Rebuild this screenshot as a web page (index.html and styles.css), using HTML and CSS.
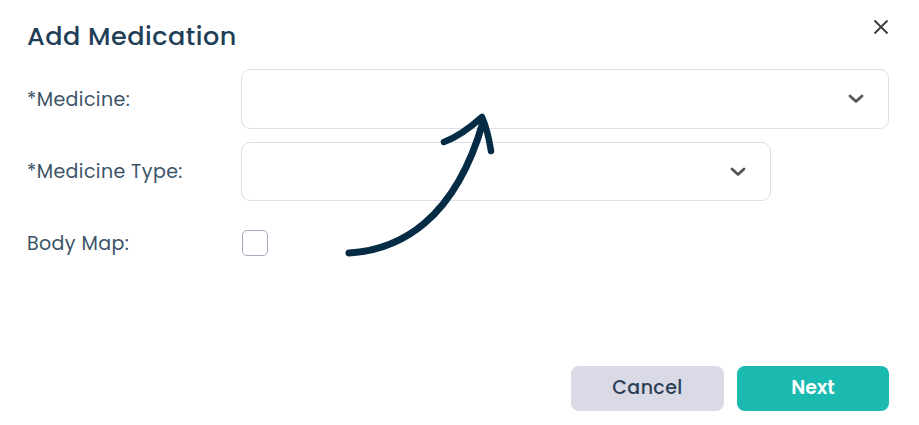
FILE: index.html
```html
<!DOCTYPE html>
<html lang="en">
<head>
    <meta charset="UTF-8">
    <meta name="viewport" content="width=device-width, initial-scale=1.0">
    <title>Add Medication</title>
    <link rel="stylesheet" href="styles.css">
</head>
<body>
    <div class="modal">
        <div class="modal-header">
            <h2>Add Medication</h2>
            <button class="close-button" aria-label="Close">
                <svg width="16" height="16" viewBox="0 0 16 16">
                    <path d="M1.5 1.5 L14.5 14.5 M14.5 1.5 L1.5 14.5" stroke="#3a3a3a" stroke-width="1.8" fill="none"/>
                </svg>
            </button>
        </div>

        <div class="form">
            <label class="form-label">*Medicine:</label>
            <div class="select wide">
                <svg class="chevron" width="16" height="10" viewBox="0 0 16 10">
                    <path d="M2 2 L8 7.5 L14 2" stroke="#555" stroke-width="2.8" fill="none" stroke-linecap="round" stroke-linejoin="round"/>
                </svg>
            </div>

            <label class="form-label">*Medicine Type:</label>
            <div class="select narrow">
                <svg class="chevron" width="16" height="10" viewBox="0 0 16 10">
                    <path d="M2 2 L8 7.5 L14 2" stroke="#555" stroke-width="2.8" fill="none" stroke-linecap="round" stroke-linejoin="round"/>
                </svg>
            </div>

            <label class="form-label">Body Map:</label>
            <div class="checkbox-cell">
                <span class="checkbox"></span>
            </div>
        </div>

        <div class="modal-footer">
            <button class="btn btn-cancel">Cancel</button>
            <button class="btn btn-next">Next</button>
        </div>

        <!-- hand drawn arrow pointing at the medicine select -->
        <svg class="arrow" width="919" height="425" viewBox="0 0 919 425">
            <path d="M349 253 C 400 250, 455 220, 483 122" stroke="#062b45" stroke-width="7" fill="none" stroke-linecap="round"/>
            <path d="M444 142 C 460 136, 472 126, 482 117 C 486 126, 489 138, 491 151" stroke="#062b45" stroke-width="6.5" fill="none" stroke-linecap="round" stroke-linejoin="round"/>
        </svg>
    </div>
</body>
</html>
```

FILE: styles.css
```css
body {
    margin: 0;
    background: #fff;
    font-family: Poppins, "Open Sans", "Noto Sans", sans-serif;
}

.modal {
    width: 919px;
    height: 425px;
    box-sizing: border-box;
    padding: 16px 30px 0 27px;
}

.modal-header {
    display: flex;
    justify-content: space-between;
    align-items: flex-start;
}

.modal-header h2 {
    margin: 0;
    font-size: 25.5px;
    font-weight: 500;
    color: #1f3e57;
    line-height: 40px;
    letter-spacing: 0.5px;
}

.close-button {
    border: none;
    background: none;
    padding: 0;
    margin-top: 3px;
    width: 16px;
    height: 16px;
    cursor: pointer;
}

.form {
    display: grid;
    grid-template-columns: 214px 1fr;
    row-gap: 13px;
    margin-top: 13px;
}

.form-label {
    display: flex;
    align-items: center;
    font-size: 19px;
    color: #3b5368;
    letter-spacing: 0.4px;
}

.select {
    height: 60px;
    box-sizing: border-box;
    border: 1.5px solid #dedde9;
    border-radius: 9px;
    display: flex;
    align-items: center;
    justify-content: flex-end;
    padding-right: 24px;
}

.select.narrow {
    width: 530px;
    height: 59px;
}

.checkbox-cell {
    height: 58px;
    display: flex;
    align-items: center;
    padding-left: 1px;
}

.checkbox {
    width: 26px;
    height: 26px;
    box-sizing: border-box;
    border: 1.5px solid #a9a7bb;
    border-radius: 5px;
}

.modal-footer {
    display: flex;
    justify-content: flex-end;
    gap: 13px;
    margin-top: 94px;
}

.btn {
    width: 153px;
    height: 45px;
    border: none;
    border-radius: 8px;
    font-family: inherit;
    font-size: 19px;
    font-weight: 500;
    padding-bottom: 3px;
    cursor: pointer;
}

.btn-cancel {
    background: #dadae6;
    color: #2d4057;
    letter-spacing: 0.4px;
}

.btn-next {
    width: 152px;
    background: #1bbab0;
    color: #fff;
    font-weight: 600;
}

.arrow {
    position: absolute;
    left: 0;
    top: 0;
    pointer-events: none;
}
```
